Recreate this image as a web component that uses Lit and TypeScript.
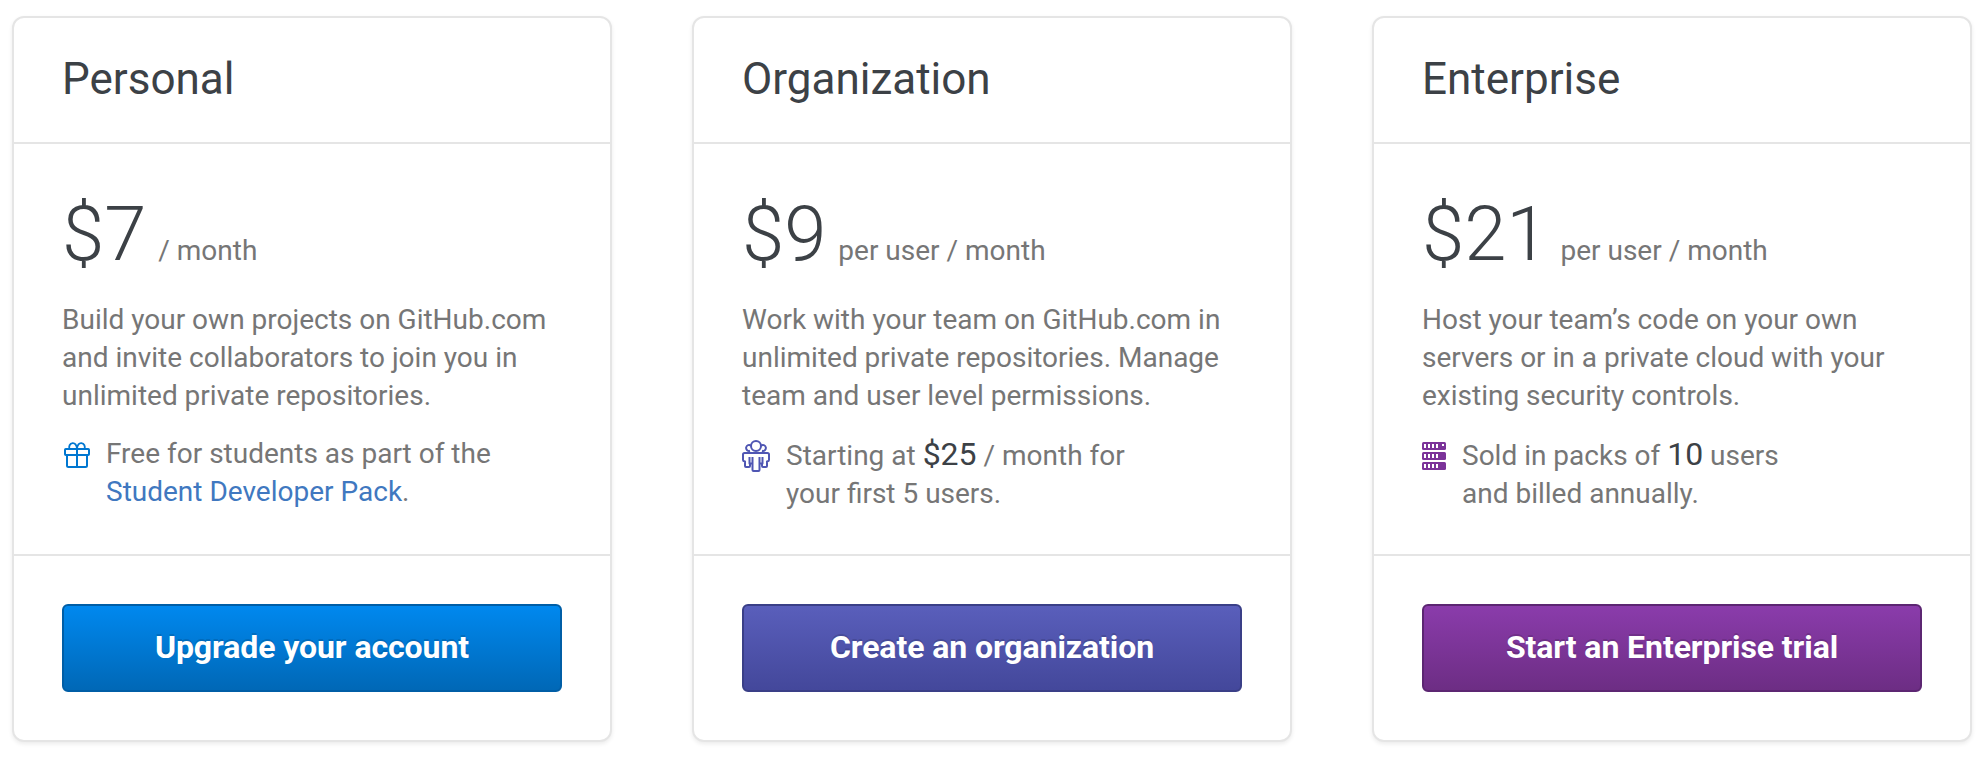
import { LitElement, html, css, svg, TemplateResult } from "lit";
import { customElement, property } from "lit/decorators.js";

const giftIcon = html`<svg class="icon gift" width="28" height="32" viewBox="0 0 28 32" fill="none" stroke="#0077d1" stroke-width="2">
  ${svg`<rect x="3" y="9" width="24" height="6" rx="0.8"/>
  <path d="M5 15v10.5q0 1.500 1.500 1.500h17q1.500 0 1.500-1.500V15M15 9v18"/>
  <path d="M7.600 9C6.400 6.600 7.800 3.400 10.600 3.100C13.200 2.900 14.600 5.600 15 8.400C15.400 5.600 16.800 2.900 19.400 3.100C22.200 3.400 23.600 6.600 22.400 9" stroke-width="1.800"/>`}
</svg>`;

const peopleIcon = html`<svg class="icon" width="28" height="32" viewBox="0 0 28 32" fill="none" stroke="#4f56b3" stroke-width="2" stroke-linejoin="round">
  ${svg`<circle cx="14" cy="6" r="5"/>
  <path d="M9 5.600A3 3 0 1 0 8 10.800M19 5.600A3 3 0 1 1 20 10.800"/>
  <path d="M10 23.500H7.500V17M18 23.500h2.500V17"/>
  <path d="M10.500 17v13q0 1 1 1h5q1 0 1-1V17"/>
  <path d="M8 13H2.500Q1 13 1 14.500V20q0 1.200 2 1.600V26q0 1 1 1h3q1 0 1-1v-2.500M20 13h5.500Q27 13 27 14.500V20q0 1.200-2 1.600V26q0 1-1 1h-3q-1 0-1-1v-2.500M7 13h14"/>`}
</svg>`;

const serverRow = (y: number, led: boolean) => svg`
  <rect x="0" y=${y} width="24" height="8" rx="1.500" fill="#7b3399"/>
  ${[2, 6, 10, 14].map((x) => svg`<rect x=${x} y=${y + 2} width="2" height="4" fill="#fff"/>`)}
  ${led ? svg`<rect x="20" y=${y + 2} width="2" height="2" fill="#fff"/>` : null}`;

const serverIcon = html`<svg class="icon" width="24" height="32" viewBox="0 0 24 32">
  ${serverRow(2, true)}${serverRow(12, false)}${serverRow(22, false)}
</svg>`;

interface Plan {
  name: string;
  price: string;
  unit: string;
  lines: string[];
  icon: TemplateResult;
  note: TemplateResult;
  action: string;
  tone: string;
}

const plans: Plan[] = [
  {
    name: "Personal",
    price: "$7",
    unit: "/ month",
    lines: ["Build your own projects on GitHub.com", "and invite collaborators to join you in", "unlimited private repositories."],
    icon: giftIcon,
    note: html`Free for students as part of the<br><a class="link">Student Developer Pack</a>.`,
    action: "Upgrade your account",
    tone: "blue",
  },
  {
    name: "Organization",
    price: "$9",
    unit: "per user / month",
    lines: ["Work with your team on GitHub.com in", "unlimited private repositories. Manage", "team and user level permissions."],
    icon: peopleIcon,
    note: html`Starting at <span class="amount">$25</span> / month for<br>your first 5 users.`,
    action: "Create an organization",
    tone: "indigo",
  },
  {
    name: "Enterprise",
    price: "$21",
    unit: "per user / month",
    lines: ["Host your team’s code on your own", "servers or in a private cloud with your", "existing security controls."],
    icon: serverIcon,
    note: html`Sold in packs of <span class="amount">10</span> users<br>and billed annually.`,
    action: "Start an Enterprise trial",
    tone: "purple",
  },
];

@customElement("plan-card")
class PlanCard extends LitElement {
  @property({ attribute: false }) plan!: Plan;

  static styles = css`
    :host {
      display: flex;
      flex-direction: column;
      box-sizing: border-box;
      width: 600px;
      height: 726px;
      border: 2px solid #e5e5e5;
      border-radius: 12px;
      background: #fff;
      box-shadow: 0 2px 4px rgba(0, 0, 0, 0.08);
      color: #767676;
    }
    .head {
      box-sizing: border-box;
      height: 126px;
      padding: 31px 48px 0;
      border-bottom: 2px solid #e5e5e5;
    }
    .title {
      margin: 0;
      font-size: 44px;
      line-height: 60px;
      font-weight: 400;
      color: #3c4146;
    }
    .body {
      box-sizing: border-box;
      height: 412px;
      padding: 45px 48px 0;
      border-bottom: 2px solid #e5e5e5;
    }
    .cost {
      display: flex;
      align-items: baseline;
      gap: 12px;
      height: 90px;
      line-height: 90px;
      white-space: nowrap;
    }
    .price {
      font-size: 76px;
      font-weight: 300;
      color: #3c4146;
    }
    .text {
      margin: 0;
      font-size: 28px;
      line-height: 38px;
      white-space: nowrap;
    }
    .unit {
      font-size: 28px;
    }
    .desc {
      margin-top: 22px;
    }
    .note {
      display: flex;
      gap: 16px;
      margin-top: 20px;
    }
    .note.tall {
      margin-top: 22px;
    }
    .icon {
      flex: none;
      display: block;
      margin-top: 3px;
    }
    .icon.gift {
      margin-top: 5px;
    }
    .amount {
      font-size: 32px;
      line-height: 1;
      color: #3c4146;
    }
    .link {
      color: #4078c0;
    }
    .foot {
      padding: 48px;
    }
    .button {
      display: block;
      box-sizing: border-box;
      width: 100%;
      height: 88px;
      padding: 0 0 2px;
      border: 2px solid;
      border-radius: 6px;
      background-origin: border-box;
      font: 700 32px Roboto, sans-serif;
      letter-spacing: -0.08px;
      color: #fff;
      text-shadow: 0 -2px 0 rgba(0, 0, 0, 0.15);
    }
    .blue {
      border-color: #005ea6;
      background-image: linear-gradient(#0089f0, #0067b5);
    }
    .indigo {
      border-color: #3a3f87;
      background-image: linear-gradient(#5a5fbc, #43479a);
    }
    .purple {
      border-color: #5c2672;
      background-image: linear-gradient(#8b3cac, #6c2d83);
    }
  `;

  render() {
    const p = this.plan;
    return html`
      <div class="head"><h2 class="title">${p.name}</h2></div>
      <div class="body">
        <div class="cost"><span class="price">${p.price}</span><span class="unit">${p.unit}</span></div>
        <p class="text desc">${p.lines.map((l, i) => (i ? html`<br>${l}` : l))}</p>
        <div class="note ${p.tone === "blue" ? "" : "tall"}">${p.icon}<p class="text">${p.note}</p></div>
      </div>
      <div class="foot"><button class="button ${p.tone}">${p.action}</button></div>
    `;
  }
}

@customElement("app-root")
class AppRoot extends LitElement {
  static styles = css`
    :host {
      display: flex;
      gap: 80px;
      box-sizing: border-box;
      width: 1988px;
      height: 760px;
      padding: 16px 12px 0;
      overflow: hidden;
      background: #fff;
      font-family: Roboto, sans-serif;
    }
    .card {
      flex: none;
    }
  `;

  render() {
    return plans.map((p) => html`<plan-card class="card" .plan=${p}></plan-card>`);
  }
}
